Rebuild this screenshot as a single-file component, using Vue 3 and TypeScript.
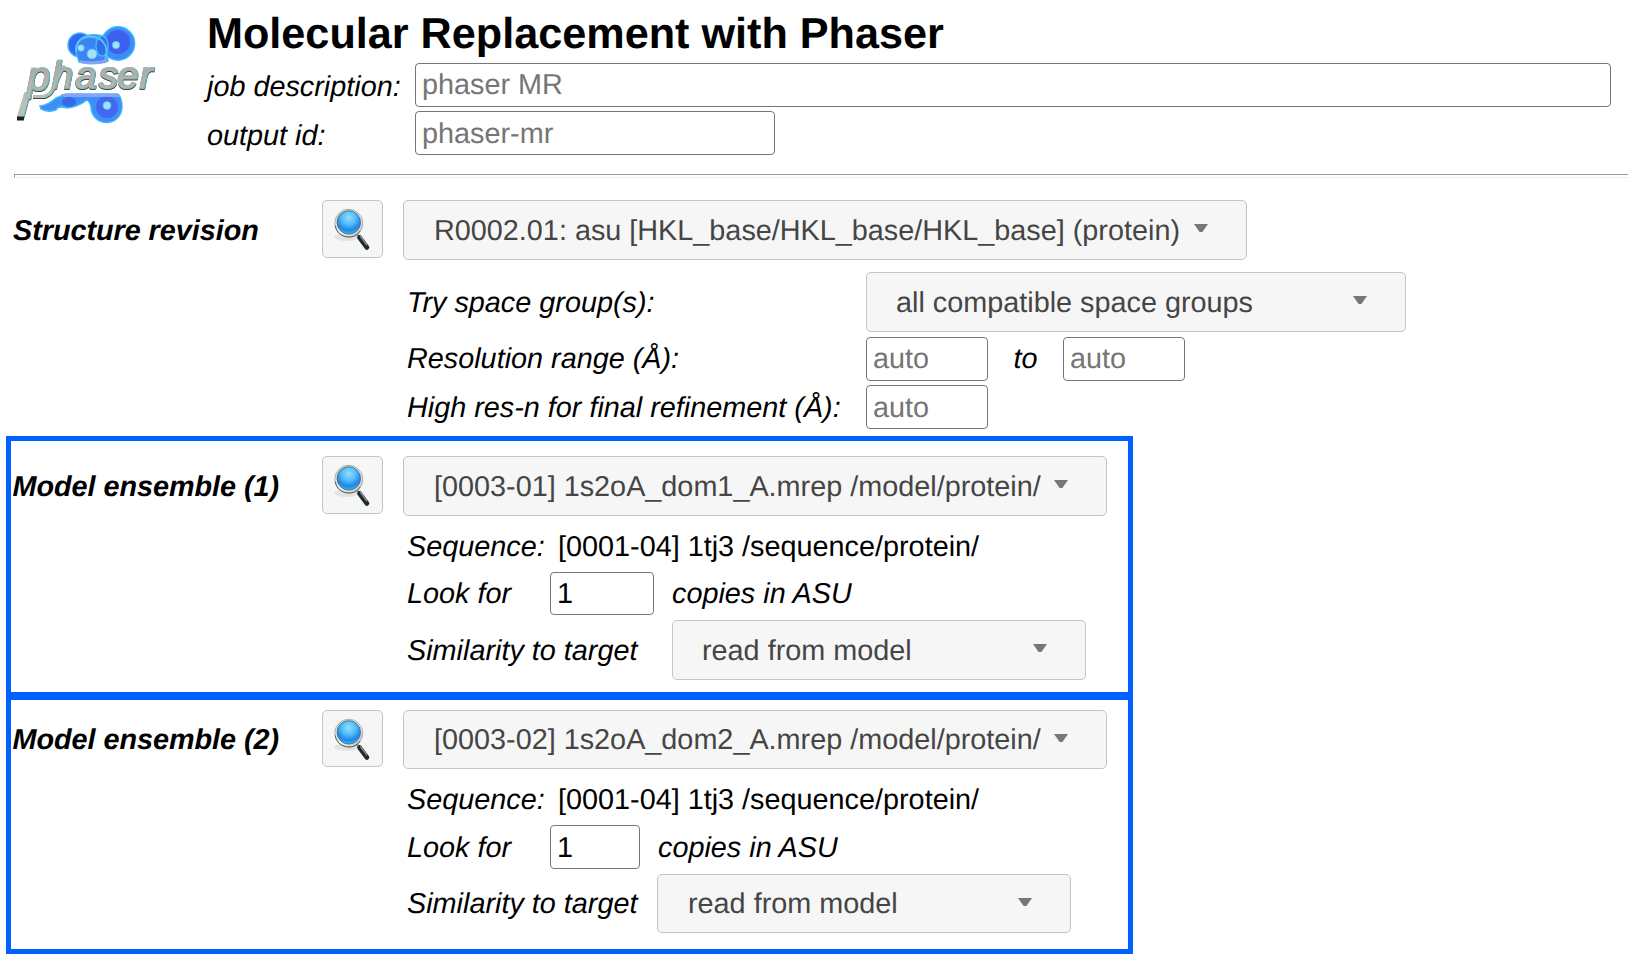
<script setup lang="ts">
import { ref } from 'vue'

interface Ensemble {
  id: number
  model: string
  sequence: string
  copies: string
}

const jobDescription = ref('')
const outputId = ref('')
const resLow = ref('')
const resHigh = ref('')
const resFinal = ref('')

const ensembles = ref<Ensemble[]>([
  { id: 1, model: '[0003-01] 1s2oA_dom1_A.mrep /model/protein/', sequence: '[0001-04] 1tj3 /sequence/protein/', copies: '1' },
  { id: 2, model: '[0003-02] 1s2oA_dom2_A.mrep /model/protein/', sequence: '[0001-04] 1tj3 /sequence/protein/', copies: '1' },
])
</script>

<template>
  <main class="task">
    <svg class="defs" width="0" height="0" aria-hidden="true">
      <defs>
        <radialGradient id="lens" cx="0.5" cy="0.3" r="0.75">
          <stop offset="0" stop-color="#8fe0ff" />
          <stop offset="0.4" stop-color="#52bcfa" />
          <stop offset="0.72" stop-color="#1f84e6" />
          <stop offset="1" stop-color="#4bd0ff" />
        </radialGradient>
        <linearGradient id="rim" x1="0" y1="0" x2="1" y2="1">
          <stop offset="0" stop-color="#c9cfcd" />
          <stop offset="0.5" stop-color="#eef3f0" />
          <stop offset="1" stop-color="#b5c2c0" />
        </linearGradient>
        <linearGradient id="steel" x1="0" y1="0" x2="0" y2="1">
          <stop offset="0" stop-color="#9ea39c" />
          <stop offset="1" stop-color="#bac3b9" />
        </linearGradient>
        <symbol id="magnifier" viewBox="0 0 61 58">
          <ellipse cx="24.500" cy="37" rx="12" ry="4" fill="#dcdcdc" opacity="0.7" />
          <path d="M34.500 34l4 4" stroke="#8a9392" stroke-width="2.500" />
          <path d="M37.500 37.500l7.500 10" stroke="#222b2c" stroke-width="4.600" stroke-linecap="round" />
          <path d="M38.500 36.700l6.200 8.200" stroke="#89999a" stroke-width="1.200" stroke-linecap="round" />
          <circle cx="26.800" cy="23.200" r="14" fill="url(#rim)" stroke="#98a5a3" stroke-width="0.800" />
          <circle cx="26.800" cy="22.400" r="11.700" fill="url(#lens)" stroke="#496b80" stroke-width="0.900" />
          <path d="M13.200 25.500a13.800 13.800 0 0 0 25 5.500" fill="none" stroke="#4c5958" stroke-width="0.900" />
        </symbol>
      </defs>
    </svg>

    <header class="head">
      <svg class="logo" viewBox="0 0 170 130" role="img" aria-label="phaser">
        <g stroke="#43b8fa" stroke-width="1.500">
          <circle cx="80" cy="45" r="12" fill="#3267ef" />
          <path d="M76 52C76 35 90 33 103 36L108 61Q93 66 79 62Z" fill="#3c83f4" />
          <circle cx="118" cy="43.500" r="16.700" fill="#3b8cf8" />
          <circle cx="118" cy="42" r="12" fill="#3e60ef" stroke="none" />
          <ellipse cx="102" cy="46" rx="6" ry="10" fill="#326ee9" />
          <path d="M76 52C75 40 84 35 94 37C105 39 109 49 105 60" fill="none" stroke="#59c5f8" stroke-width="1.800" />
          <path d="M40 106Q48 105 56 98L66 94H118Q122 98 122 107A15.500 15.500 0 0 1 91 107Q90 102 87 100Q78 107 67 108Q58 105 56 110Q47 113 41 109Z" fill="#3d8ef6" />
          <circle cx="107" cy="107" r="11" fill="#4268ef" stroke="none" />
          <ellipse cx="69" cy="102" rx="7" ry="5" fill="#3768e8" stroke="none" />
        </g>
        <path d="M79 60Q92 63 108 59L106 63Q93 65 80 63ZM61 94H118L120 97H64Z" fill="#8ba2f2" />
        <g fill="#a1e2f7" stroke="#4fbcf7" stroke-width="0.700">
          <circle cx="81" cy="48" r="3.300" />
          <circle cx="92" cy="54" r="5" />
          <circle cx="116" cy="45" r="3.700" />
          <circle cx="107" cy="105.500" r="4" />
        </g>
        <g class="raised">
          <path d="M33 96.500H42C55 96.500 56 74 64 66" fill="none" stroke="#b4bcb3" stroke-width="3" />
          <path d="M24.500 92h5.500l-6.500 25h-6.500z" fill="#b8c1b7" />
          <text class="word" y="90 87.500" x="27 51.500 75 98.500 117 139.500"><tspan class="initial">p</tspan>haser</text>
        </g>
        <path d="M17 116.500h7v4h-7z" fill="#1b2424" />
      </svg>
      <div class="head-fields">
        <h1>Molecular Replacement with Phaser</h1>
        <div class="row head-row">
          <label class="lbl head-label">job description:</label>
          <input v-model="jobDescription" class="field wide" placeholder="phaser MR" />
        </div>
        <div class="row head-row second">
          <label class="lbl head-label">output id:</label>
          <input v-model="outputId" class="field medium" placeholder="phaser-mr" />
        </div>
      </div>
    </header>

    <div class="rule"></div>

    <section class="revision">
      <div class="row">
        <strong class="name">Structure revision</strong>
        <button class="inspect"><svg><use href="#magnifier" /></svg></button>
        <button class="combo revision-combo">
          <span>R0002.01: asu [HKL_base/HKL_base/HKL_base] (protein)</span><i class="caret"></i>
        </button>
      </div>
      <div class="row sub group-row">
        <label class="lbl param">Try space group(s):</label>
        <button class="combo group-combo"><span>all compatible space groups</span><i class="caret"></i></button>
      </div>
      <div class="row sub range-row">
        <label class="lbl param">Resolution range (Å):</label>
        <input v-model="resLow" class="field short" placeholder="auto" />
        <span class="lbl to">to</span>
        <input v-model="resHigh" class="field short" placeholder="auto" />
      </div>
      <div class="row sub final-row">
        <label class="lbl param">High res-n for final refinement (Å):</label>
        <input v-model="resFinal" class="field short" placeholder="auto" />
      </div>
    </section>

    <section v-for="e in ensembles" :key="e.id" class="ensemble" :class="`ensemble-${e.id}`">
      <div class="row">
        <strong class="name">Model ensemble ({{ e.id }})</strong>
        <button class="inspect"><svg><use href="#magnifier" /></svg></button>
        <button class="combo model-combo"><span>{{ e.model }}</span><i class="caret"></i></button>
      </div>
      <div class="row sub sequence-row">
        <label class="lbl seq-label">Sequence:</label>
        <span>{{ e.sequence }}</span>
      </div>
      <div class="row sub copies-row">
        <label class="lbl look">Look for</label>
        <input v-model="e.copies" class="field count" />
        <span class="lbl copies">copies in ASU</span>
      </div>
      <div class="row sub similarity-row">
        <label class="lbl similarity">Similarity to target</label>
        <button class="combo similarity-combo"><span>read from model</span><i class="caret"></i></button>
      </div>
    </section>
  </main>
</template>

<style>
html,
body {
  background: #fff;
  overflow: hidden;
}
</style>

<style scoped>
.task,
.task * {
  box-sizing: border-box;
}
.task {
  width: 1628px;
  height: 956px;
  overflow: hidden;
  background: #fff;
  color: #000;
  font: 28.8px/34px "Liberation Sans", Arial, sans-serif;
  text-rendering: geometricPrecision;
}
.defs {
  display: block;
}
.head {
  display: flex;
  height: 174px;
}
.logo {
  width: 170px;
  height: 130px;
  flex: none;
}
.raised {
  filter: drop-shadow(1px 0.7px 0 #60b4d0) drop-shadow(0.8px 1.8px 0 #39464a);
}
.word {
  font-family: "Liberation Sans", Arial, sans-serif;
  font-style: italic;
  font-size: 38px;
  fill: url(#steel);
  stroke: #a9b1a8;
  stroke-width: 1.3px;
}
.initial {
  font-size: 41px;
}
.head-fields {
  margin-left: 37px;
}
h1 {
  margin: 0;
  height: 63px;
  font-size: 43.2px;
  line-height: 68px;
  white-space: nowrap;
}
.row {
  display: flex;
  align-items: flex-start;
  white-space: nowrap;
}
.lbl {
  flex: none;
  font-style: italic;
  line-height: 44px;
}
.head-row {
  height: 44px;
}
.head-row .lbl {
  line-height: 48px;
}
.head-label {
  width: 208px;
}
.second {
  margin-top: 4px;
}
.head-row.second .lbl {
  line-height: 50px;
}
.field {
  flex: none;
  height: 44px;
  margin: 0;
  padding: 0 6px;
  border: 1px solid #767676;
  border-radius: 4px;
  outline: 0;
  background: #fff;
  color: #000;
  font: inherit;
  text-rendering: inherit;
}
.field::placeholder {
  color: #757575;
  opacity: 1;
}
.wide {
  width: 1196px;
}
.medium {
  width: 360px;
}
.second .field,
.final-row .field {
  padding-top: 2px;
}
.rule {
  height: 4px;
  margin-left: 14px;
  border: 1px solid #eee;
  border-top-color: #999;
  border-left-color: #999;
  border-right: 0;
}
.revision {
  padding: 22px 0 0 13px;
  height: 258px;
}
.name {
  width: 309px;
  font-style: italic;
  line-height: 62px;
  letter-spacing: -0.04px;
  height: 60px;
}
.inspect {
  flex: none;
  width: 61px;
  height: 58px;
  margin: 0 20px 0 0;
  padding: 0;
  border: 1px solid #c5c5c5;
  border-radius: 5px;
  background: #f6f6f6;
}
.inspect svg {
  display: block;
  width: 61px;
  height: 58px;
  margin: -1px;
}
.combo {
  flex: none;
  display: flex;
  justify-content: space-between;
  height: 60px;
  margin: 0;
  padding: 0 38px 0 29px;
  border: 1px solid #c5c5c5;
  border-radius: 5px;
  background: #f6f6f6;
  color: #454545;
  font: inherit;
  line-height: 60px;
  text-rendering: inherit;
}
.caret {
  width: 14px;
  height: 8px;
  margin-top: 23px;
  background: #777;
  clip-path: polygon(0 0, 100% 0, 60% 100%, 40% 100%);
}
.revision-combo,
.model-combo {
  padding-left: 30px;
}
.revision-combo {
  width: 844px;
}
.sub {
  padding-left: 394px;
}
.group-row {
  height: 60px;
  margin-top: 12px;
}
.group-row .lbl {
  line-height: 62px;
}
.param {
  width: 459px;
}
.group-combo {
  width: 540px;
}
.range-row {
  height: 44px;
  margin-top: 5px;
}
.final-row {
  margin-top: 4px;
}
.final-row .lbl {
  line-height: 46px;
}
.short {
  width: 122px;
}
.to {
  width: 75px;
  padding-left: 25.5px;
}
.ensemble {
  width: 1127px;
  height: 260px;
  margin-left: 6px;
  padding: 15px 0 0 2px;
  border: 5px solid #0061ff;
  border-bottom-width: 4px;
}
.model-combo {
  width: 704px;
}
.sequence-row {
  height: 34px;
  margin-top: 13px;
  line-height: 36px;
}
.seq-label {
  width: 151px;
  line-height: 36px;
}
.copies-row {
  height: 43px;
  margin-top: 9px;
}
.look {
  width: 143px;
}
.count {
  width: 104px;
  height: 43px;
  padding-top: 1px;
}
.copies {
  margin-left: 18px;
}
.similarity-row {
  margin-top: 5px;
}
.similarity-row .lbl {
  line-height: 62px;
}
.similarity {
  width: 265px;
}
.similarity-combo {
  width: 414px;
}
.ensemble-1 .name,
.ensemble-2 .name {
  margin-left: -0.5px;
  margin-right: 0.5px;
}
.ensemble-2 {
  height: 258px;
  padding-top: 10px;
  border-top-width: 4px;
  border-bottom-width: 5px;
}
.ensemble-2 .name {
  height: 59px;
  line-height: 60px;
}
.ensemble-2 .inspect {
  height: 57px;
}
.ensemble-2 .combo {
  height: 59px;
  line-height: 59px;
}
.ensemble-2 .count {
  width: 90px;
  height: 44px;
  padding-top: 2px;
}
.ensemble-2 .copies-row {
  height: 44px;
}
.ensemble-2 .copies-row .lbl {
  line-height: 46px;
}
.ensemble-2 .similarity {
  width: 250px;
}
.ensemble-2 .similarity-combo {
  padding-left: 30px;
}
.ensemble-2 .similarity-row .lbl {
  line-height: 60px;
}
</style>
